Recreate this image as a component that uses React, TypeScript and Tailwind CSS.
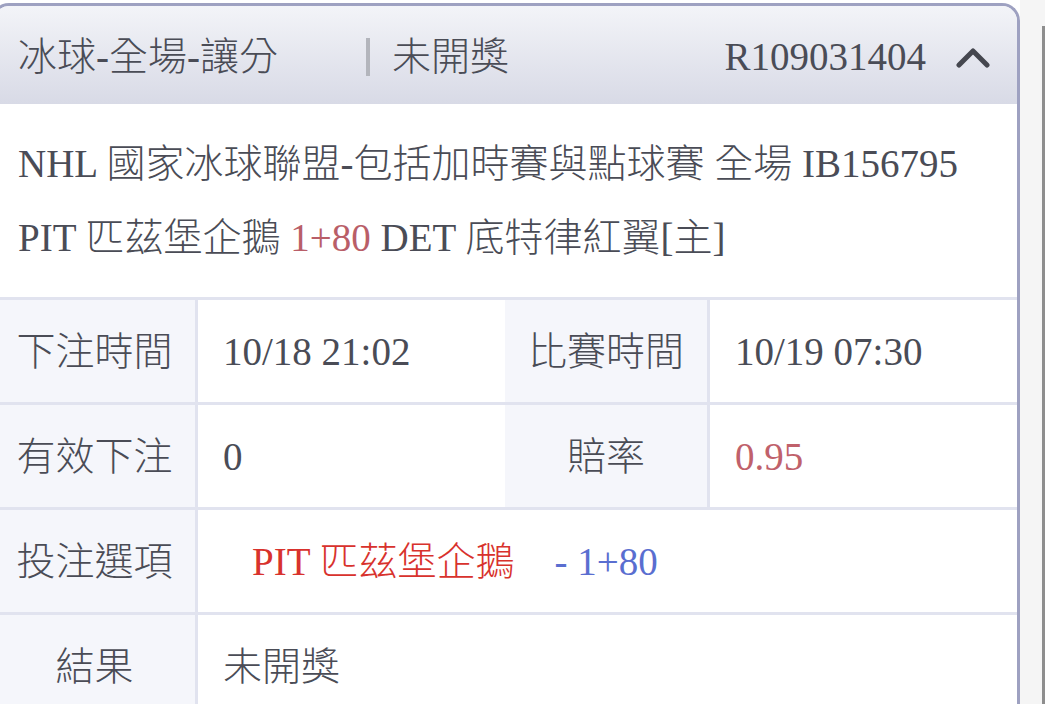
import React from "react";

const font = { fontFamily: '"Liberation Serif", "Noto Sans CJK TC", serif' };

function Label({ children, w }: { children: React.ReactNode; w: string }) {
  return (
    <div className={`${w} shrink-0 bg-[#f5f6fb] flex items-center justify-center text-[#4a4c56]`}>
      {children}
    </div>
  );
}

export default function App() {
  return (
    <div className="w-[1045px] h-[704px] overflow-hidden bg-white flex text-[39px] leading-none font-light" style={font}>
      <div className="ml-[-9px] mt-[3px] w-[1029px] shrink-0 border-[3px] border-b-0 border-[#9ea1c1] rounded-t-[18px] bg-white overflow-hidden flex flex-col">
        {/* header */}
        <div className="h-[98px] shrink-0 bg-gradient-to-b from-[#f3f4f8] to-[#d8dae6] flex items-center pl-[24px] pr-[27px] pt-[3px] text-[#4a4c56]">
          <div className="w-[348px] shrink-0">冰球-全場-讓分</div>
          <div className="w-[4px] h-[38px] bg-[#b3b5bc] shrink-0"></div>
          <div className="ml-[22px]">未開獎</div>
          <div className="flex-1"></div>
          <div>R109031404</div>
          <svg className="ml-[30px]" width="34" height="22" viewBox="0 0 34 22">
            <polyline points="3,19 17,5 31,19" fill="none" stroke="#45474f" strokeWidth="5" strokeLinecap="round" strokeLinejoin="round" />
          </svg>
        </div>
        {/* info */}
        <div className="pl-[24px] pt-[22px] pb-[23px] text-[#4a4c56]">
          <div className="h-[74px] flex items-center whitespace-nowrap">NHL 國家冰球聯盟-包括加時賽與點球賽 全場 IB156795</div>
          <div className="h-[74px] flex items-center whitespace-nowrap">
            PIT 匹茲堡企鵝&nbsp;<span className="text-[#b95e68]">1+80</span>&nbsp;DET 底特律紅翼[主]
          </div>
        </div>
        {/* table */}
        <div className="flex flex-col text-[#4a4c56]">
          <div className="flex h-[105px] border-t-[3px] border-[#e1e3ef]">
            <Label w="w-[201px]">下注時間</Label>
            <div className="w-[310px] shrink-0 border-l-[3px] border-[#e1e3ef] flex items-center pl-[25px]">10/18 21:02</div>
            <Label w="w-[202px]">比賽時間</Label>
            <div className="flex-1 border-l-[3px] border-[#e1e3ef] flex items-center pl-[25px]">10/19 07:30</div>
          </div>
          <div className="flex h-[105px] border-t-[3px] border-[#e1e3ef]">
            <Label w="w-[201px]">有效下注</Label>
            <div className="w-[310px] shrink-0 border-l-[3px] border-[#e1e3ef] flex items-center pl-[25px]">0</div>
            <Label w="w-[202px]">賠率</Label>
            <div className="flex-1 border-l-[3px] border-[#e1e3ef] flex items-center pl-[25px] text-[#c0616b]">0.95</div>
          </div>
          <div className="flex h-[105px] border-t-[3px] border-[#e1e3ef]">
            <Label w="w-[201px]">投注選項</Label>
            <div className="flex-1 border-l-[3px] border-[#e1e3ef] flex items-center pl-[54px] whitespace-nowrap">
              <span className="text-[#d8322d]">PIT 匹茲堡企鵝</span>
              <span className="ml-[40px] text-[#5a6ed0]">- 1+80</span>
            </div>
          </div>
          <div className="flex h-[105px] border-t-[3px] border-[#e1e3ef]">
            <Label w="w-[201px]">結果</Label>
            <div className="flex-1 border-l-[3px] border-[#e1e3ef] flex items-center pl-[25px]">未開獎</div>
          </div>
        </div>
      </div>
      <div className="flex-1 bg-[#f5f5f5] flex justify-end">
        <div className="w-[3px] mt-[26px] bg-[#8e8e8e]"></div>
      </div>
    </div>
  );
}
